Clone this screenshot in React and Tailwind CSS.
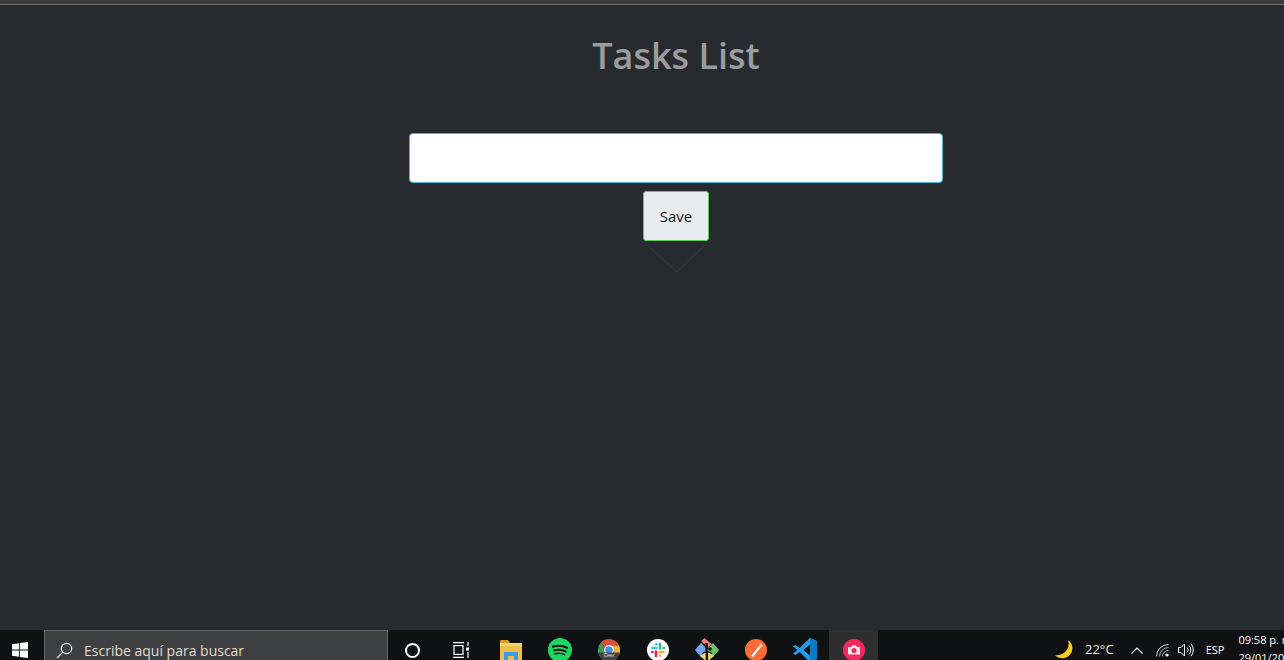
import React from 'react';

const Slot = ({ className = 'w-[49px]', children }) => (
    <div className={`h-10 shrink-0 flex items-center justify-center ${className}`}>{children}</div>
);

const WindowsLogo = () => (
    <svg width="16" height="16" viewBox="0 0 16 16" fill="#fff">
        <path d="M0 2.2 6.9 1.2V7.6H0ZM7.8 1.1 16 0V7.6H7.8ZM0 8.4H6.9V14.8L0 13.8ZM7.8 8.4H16V16L7.8 14.9Z" />
    </svg>
);

const SearchIcon = () => (
    <svg width="17" height="17" viewBox="0 0 17 17" fill="none" stroke="#e6e6e6" strokeWidth="1.2">
        <circle cx="10.5" cy="6.5" r="5.2" />
        <path d="M6.8 10.2 1 16" />
    </svg>
);

const TaskView = () => (
    <svg width="17" height="16" viewBox="0 0 17 16" fill="none" stroke="#fff" strokeWidth="1.2">
        <path d="M0 .6H11M0 15.4H11" />
        <rect x="1" y="3.6" width="9" height="8.8" />
        <rect x="13" y="5.5" width="3" height="3" fill="#fff" stroke="none" />
        <path d="M15 0V4M15 10V16" />
    </svg>
);

const Folder = () => (
    <svg width="22" height="20" viewBox="0 0 22 20">
        <path d="M0 1a1 1 0 0 1 1-1h7l2 3H0Z" fill="#d69f2b" />
        <rect x="0" y="3" width="22" height="17" fill="#eebd4c" />
        <rect x="0" y="3" width="22" height="3" fill="#f7d670" />
        <path d="M4 20V12H18V20H14V16H8V20Z" fill="#3f9ade" />
    </svg>
);

const Spotify = () => (
    <svg width="24" height="24" viewBox="0 0 24 24">
        <circle cx="12" cy="12" r="12" fill="#1ed760" />
        <g fill="none" stroke="#111" strokeLinecap="round">
            <path d="M5 8.6c4.8-1.4 9.8-1 14 1.2" strokeWidth="2.2" />
            <path d="M6 12.4c4-1.1 8.2-.8 11.8 1.1" strokeWidth="1.9" />
            <path d="M7 15.8c3.4-.9 6.8-.6 9.6.9" strokeWidth="1.5" />
        </g>
    </svg>
);

const Chrome = () => (
    <svg width="22" height="24" viewBox="0 0 22 24">
        <path d="M11 1A11 11 0 0 1 21 7.5H11A4.6 4.6 0 0 0 6.8 10L3 4.2A11 11 0 0 1 11 1Z" fill="#d9503f" />
        <path d="M21 7.5A11 11 0 0 1 22 12V16H15.5V12A4.6 4.6 0 0 0 11 7.5Z" fill="#e8b92e" />
        <path d="M3 4.2 6.8 10V16H0V12A11 11 0 0 1 3 4.2Z" fill="#3f9a54" />
        <circle cx="11" cy="12" r="5" fill="#fff" />
        <circle cx="11" cy="12" r="3.8" fill="#4a8cf0" />
        <path d="M0 14.5H22V13A11 11 0 0 1 0 13Z" fill="#444" />
        <text x="11" y="19" textAnchor="middle" fontSize="6" fill="#e0e0e0">Dev</text>
    </svg>
);

const Slack = () => (
    <svg width="22" height="22" viewBox="0 0 22 22">
        <circle cx="11" cy="11" r="11" fill="#fff" />
        <g strokeWidth="2.6" strokeLinecap="round" fill="none">
            <path d="M5.5 9H9.5" stroke="#36c5f0" />
            <path d="M9.4 5V5.4" stroke="#36c5f0" />
            <path d="M13 5V9.5" stroke="#2eb67d" />
            <path d="M16.6 9H16.8" stroke="#2eb67d" />
            <path d="M12.5 13H16.5" stroke="#ecb22e" />
            <path d="M13 16.6V16.8" stroke="#ecb22e" />
            <path d="M9 12.5V17" stroke="#e01e5a" />
            <path d="M5.2 13H5.4" stroke="#e01e5a" />
        </g>
    </svg>
);

const GitKraken = () => (
    <svg width="24" height="24" viewBox="0 0 24 24">
        <path d="M6 3 9.5 0 16.5 6 13 9.5Z" fill="#ee7b7f" />
        <path d="M0 12 6 5 13 12 6 19Z" fill="#6fa8f0" />
        <path d="M11 12 18 5 24 12 18 19Z" fill="#6cc06e" />
        <path d="M5 18 12 12 19 18 12 24Z" fill="#efd76f" />
        <g stroke="#151515" fill="none">
            <path d="M11.5 5 12 24" strokeWidth="2.4" />
            <path d="M7 16C9 13 15 13 17 16" strokeWidth="1.4" />
        </g>
        <circle cx="15" cy="11" r="1.8" fill="#151515" />
    </svg>
);

const Postman = () => (
    <svg width="22" height="22" viewBox="0 0 22 22">
        <circle cx="11" cy="11" r="11" fill="#ff6c37" />
        <path d="M6 17 14.5 6.5 16 8 8 18Z" fill="#fff" />
        <path d="M14 5.5a2 2 0 0 1 3 3Z" fill="#ffd9c9" />
    </svg>
);

const VSCode = () => (
    <svg width="24" height="24" viewBox="0 0 24 24">
        <path d="M17 0 24 3V21L17 24 6.5 14 2.5 17 0 15.5 4.5 12 0 8.5 2.5 7 6.5 10ZM17 6.5 10.5 12 17 17.5Z" fill="#1f9cf0" />
        <path d="M17 0 24 3V21L17 24Z" fill="#0b7ac5" />
        <path d="M17 6.5V17.5L19 19V5Z" fill="#0b7ac5" />
    </svg>
);

const Camera = () => (
    <svg width="22" height="22" viewBox="0 0 22 22">
        <circle cx="11" cy="11" r="11" fill="#f5275f" />
        <path d="M5 8h3l1.2-1.8h3.6L14 8h3v7.5H5Z" fill="#fbe3ea" />
        <circle cx="11" cy="11.6" r="2.5" fill="#f5275f" />
    </svg>
);

const Moon = () => (
    <svg className="shrink-0" width="19" height="20" viewBox="0 0 19 20">
        <path d="M13 0A10 10 0 1 1 0 15 11.5 11.5 0 0 0 13 0Z" fill="#f8cc1b" />
    </svg>
);

const Chevron = () => (
    <svg className="block" width="12" height="7" viewBox="0 0 12 7" fill="none" stroke="#fff" strokeWidth="1.2">
        <path d="M.5 6.5 6 1l5.5 5.5" />
    </svg>
);

const Wifi = () => (
    <svg className="block" width="13" height="13" viewBox="0 0 13 13" fill="none" stroke="#d9d9d9" strokeWidth="1">
        <path d="M.5 12.5A12 12 0 0 1 12.5 .5" />
        <path d="M3.5 12.5A9 9 0 0 1 12.5 3.5" opacity=".8" />
        <path d="M6.5 12.5A6 6 0 0 1 12.5 6.5" opacity=".8" />
        <circle cx="11" cy="11" r="1.6" fill="#fff" stroke="none" />
    </svg>
);

const Speaker = () => (
    <svg className="block" width="16" height="14" viewBox="0 0 16 14" fill="none" stroke="#fff" strokeWidth="1">
        <path d="M.5 4.5H3L6.5 1V13L3 9.5H.5Z" />
        <path d="M9 4.5a3.5 3.5 0 0 1 0 5M11 2.5a6.5 6.5 0 0 1 0 9M13 .8a9.5 9.5 0 0 1 0 12.4" />
    </svg>
);

export default function App() {
    return (
        <div className="h-[660px] w-[1284px] overflow-hidden flex flex-col bg-[#272a2f] font-['Open_Sans','Noto_Sans',sans-serif]">
            <div className="h-[5px] shrink-0 bg-[#3b3b3b] border-b border-[#6f6f6f]" />

            <main className="flex-1 ml-[409px] w-[534px] flex flex-col items-center">
                <h1 className="mt-[24px] text-[36px] leading-[54px] font-semibold text-[#9b9c9d]">Tasks List</h1>
                <input
                    type="text"
                    className="mt-[50px] w-full h-[50px] bg-white rounded-[4px] border border-[#3fb8d6] outline-none"
                />
                <div className="relative mt-2">
                    <button className="block w-[66px] h-[50px] bg-[#e9ecef] rounded-[3px] border border-[#5ccb5f] text-[15px] text-[#15171a]">
                        Save
                    </button>
                    <svg className="absolute left-0 top-[50px]" width="66" height="32" viewBox="0 0 66 32" fill="none" stroke="#36393d">
                        <path d="M1 1 34 31 65 1" />
                    </svg>
                </div>
            </main>

            <footer className="h-[30px] shrink-0 flex items-start bg-[#101112]">
                <Slot className="w-[44px] pr-1"><WindowsLogo /></Slot>
                <div className="w-[344px] h-10 shrink-0 flex items-center gap-[11px] pl-[11px] bg-[#3e3f40] border border-[#636465]">
                    <SearchIcon />
                    <span className="text-[14px] text-[#e0dcd2]">Escribe aquí para buscar</span>
                </div>
                <Slot className="w-[48px]">
                    <div className="w-[15px] h-[15px] rounded-full border-2 border-white" />
                </Slot>
                <Slot className="w-[50px]"><TaskView /></Slot>
                <Slot><Folder /></Slot>
                <Slot><Spotify /></Slot>
                <Slot><Chrome /></Slot>
                <Slot><Slack /></Slot>
                <Slot><GitKraken /></Slot>
                <Slot><Postman /></Slot>
                <Slot><VSCode /></Slot>
                <Slot className="w-[49px] bg-[#2e2e2e]"><Camera /></Slot>

                <div className="ml-auto w-[229px] shrink-0 h-10 flex items-center overflow-hidden text-white">
                    <Moon />
                    <span className="ml-[11px] shrink-0 text-[13px] text-[#e6e6e6]">22°C</span>
                    <div className="ml-[17px] shrink-0"><Chevron /></div>
                    <div className="ml-[13px] shrink-0"><Wifi /></div>
                    <div className="ml-[9px] shrink-0"><Speaker /></div>
                    <span className="ml-[12px] shrink-0 text-[11px]">ESP</span>
                    <div className="ml-[14px] shrink-0 text-[11px] leading-[18px] whitespace-nowrap -translate-y-[1px]">
                        <div>09:58 p. m.</div>
                        <div>29/01/2022</div>
                    </div>
                </div>
            </footer>
        </div>
    );
}
